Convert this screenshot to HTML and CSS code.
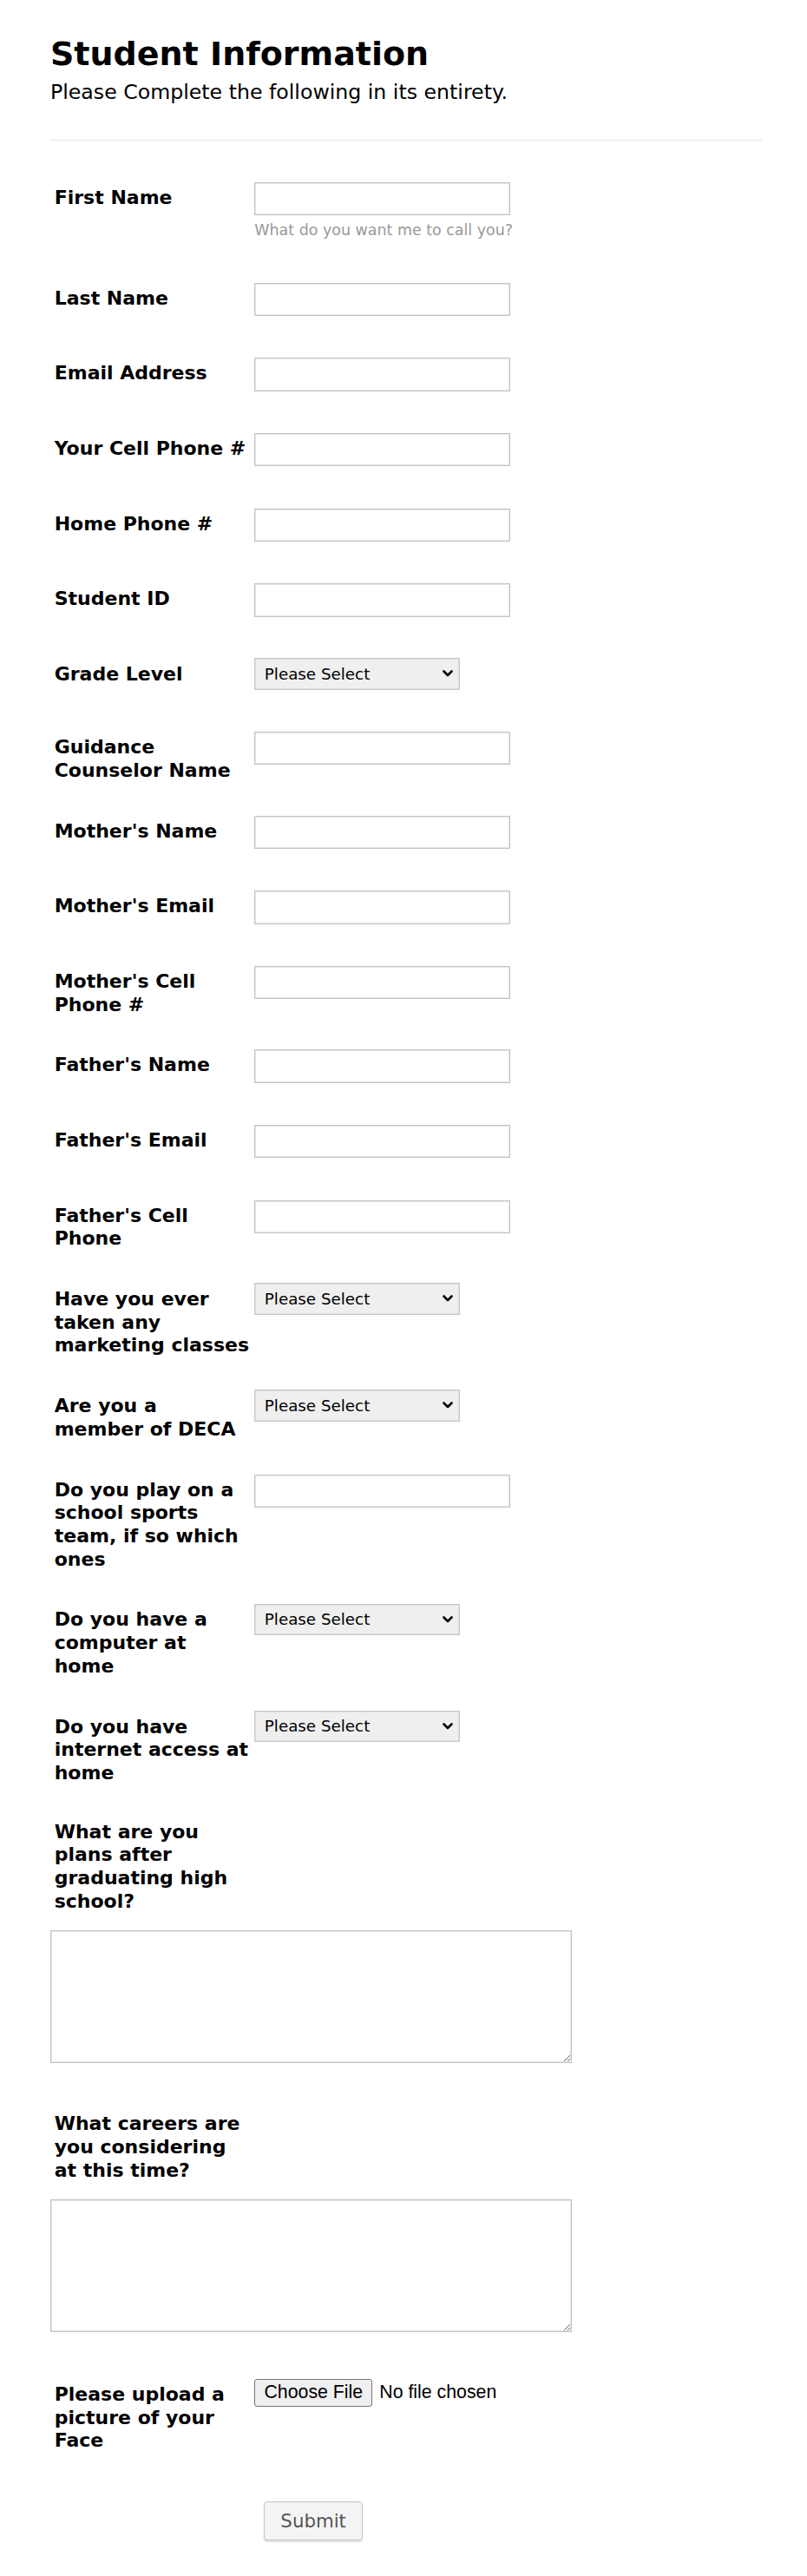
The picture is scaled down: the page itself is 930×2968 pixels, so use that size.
FILE: index.html
```html
<!DOCTYPE html>
<html lang="en">
<head>
<meta charset="utf-8">
<title>Student Information</title>
<link rel="stylesheet" href="styles.css">
</head>
<body>
<form class="form">
  <header class="form-header">
    <h1 class="title">Student Information</h1>
    <p class="subtitle">Please Complete the following in its entirety.</p>
  </header>
  <hr class="divider">

  <div class="row">
    <label class="label">First Name</label>
    <div class="control">
      <input class="textbox" type="text">
      <div class="sublabel">What do you want me to call you?</div>
    </div>
  </div>

  <div class="row">
    <label class="label">Last Name</label>
    <div class="control"><input class="textbox" type="text"></div>
  </div>

  <div class="row">
    <label class="label">Email Address</label>
    <div class="control"><input class="textbox" type="email"></div>
  </div>

  <div class="row">
    <label class="label">Your Cell Phone #</label>
    <div class="control"><input class="textbox" type="text"></div>
  </div>

  <div class="row">
    <label class="label">Home Phone #</label>
    <div class="control"><input class="textbox" type="text"></div>
  </div>

  <div class="row">
    <label class="label">Student ID</label>
    <div class="control"><input class="textbox" type="text"></div>
  </div>

  <div class="row">
    <label class="label">Grade Level</label>
    <div class="control">
      <span class="select-wrap">
        <select class="dropdown"><option>Please Select</option></select>
        <svg class="chevron" viewBox="0 0 12 8" aria-hidden="true"><path d="M1.5 1.5 L6 6 L10.5 1.5" fill="none" stroke="#000" stroke-width="2.6" stroke-linecap="round" stroke-linejoin="round"/></svg>
      </span>
    </div>
  </div>

  <div class="row">
    <label class="label">Guidance Counselor Name</label>
    <div class="control"><input class="textbox" type="text"></div>
  </div>

  <div class="row">
    <label class="label">Mother's Name</label>
    <div class="control"><input class="textbox" type="text"></div>
  </div>

  <div class="row">
    <label class="label">Mother's Email</label>
    <div class="control"><input class="textbox" type="email"></div>
  </div>

  <div class="row">
    <label class="label">Mother's Cell Phone #</label>
    <div class="control"><input class="textbox" type="text"></div>
  </div>

  <div class="row">
    <label class="label">Father's Name</label>
    <div class="control"><input class="textbox" type="text"></div>
  </div>

  <div class="row">
    <label class="label">Father's Email</label>
    <div class="control"><input class="textbox" type="email"></div>
  </div>

  <div class="row">
    <label class="label">Father's Cell Phone</label>
    <div class="control"><input class="textbox" type="text"></div>
  </div>

  <div class="row">
    <label class="label">Have you ever taken any marketing classes</label>
    <div class="control">
      <span class="select-wrap">
        <select class="dropdown"><option>Please Select</option></select>
        <svg class="chevron" viewBox="0 0 12 8" aria-hidden="true"><path d="M1.5 1.5 L6 6 L10.5 1.5" fill="none" stroke="#000" stroke-width="2.6" stroke-linecap="round" stroke-linejoin="round"/></svg>
      </span>
    </div>
  </div>

  <div class="row">
    <label class="label">Are you a member of DECA</label>
    <div class="control">
      <span class="select-wrap">
        <select class="dropdown"><option>Please Select</option></select>
        <svg class="chevron" viewBox="0 0 12 8" aria-hidden="true"><path d="M1.5 1.5 L6 6 L10.5 1.5" fill="none" stroke="#000" stroke-width="2.6" stroke-linecap="round" stroke-linejoin="round"/></svg>
      </span>
    </div>
  </div>

  <div class="row">
    <label class="label">Do you play on a school sports team, if so which ones</label>
    <div class="control"><input class="textbox" type="text"></div>
  </div>

  <div class="row">
    <label class="label">Do you have a computer at home</label>
    <div class="control">
      <span class="select-wrap">
        <select class="dropdown"><option>Please Select</option></select>
        <svg class="chevron" viewBox="0 0 12 8" aria-hidden="true"><path d="M1.5 1.5 L6 6 L10.5 1.5" fill="none" stroke="#000" stroke-width="2.6" stroke-linecap="round" stroke-linejoin="round"/></svg>
      </span>
    </div>
  </div>

  <div class="row">
    <label class="label">Do you have internet access at home</label>
    <div class="control">
      <span class="select-wrap">
        <select class="dropdown"><option>Please Select</option></select>
        <svg class="chevron" viewBox="0 0 12 8" aria-hidden="true"><path d="M1.5 1.5 L6 6 L10.5 1.5" fill="none" stroke="#000" stroke-width="2.6" stroke-linecap="round" stroke-linejoin="round"/></svg>
      </span>
    </div>
  </div>

  <div class="row row-stack">
    <label class="label label-top">What are you plans after graduating high school?</label>
    <div class="control control-area"><textarea class="textarea"></textarea></div>
  </div>

  <div class="row row-stack">
    <label class="label label-top">What careers are you considering at this time?</label>
    <div class="control control-area"><textarea class="textarea"></textarea></div>
  </div>

  <div class="row">
    <label class="label">Please upload a picture of your Face</label>
    <div class="control">
      <label class="file-field">
        <input class="file-native" type="file">
        <span class="file-btn">Choose File</span>
        <span class="file-status">No file chosen</span>
      </label>
    </div>
  </div>

  <div class="row row-submit">
    <button class="submit" type="button">Submit</button>
  </div>
</form>
</body>
</html>
```

FILE: styles.css
```css
html, body {
  margin: 0;
  padding: 0;
  background: #ffffff;
}

body {
  font-family: "DejaVu Sans", Verdana, sans-serif;
  color: #000000;
}

.form {
  padding: 40px 52px 30px 58px;
}

.form-header {
  display: flex;
  flex-direction: column;
}

.title {
  margin: 0;
  font-size: 38px;
  line-height: 44px;
  font-weight: bold;
}

.subtitle {
  margin: 8px 0 0;
  font-size: 23.65px;
  line-height: 28px;
  font-weight: normal;
}

.divider {
  border: 0;
  border-top: 1px solid #e4e4e4;
  height: 0;
  margin: 41px 0 29px;
}

.row {
  display: flex;
  align-items: flex-start;
  padding: 19px 0 19px;
}

.label {
  flex: 0 0 235.3px;
  box-sizing: border-box;
  padding: 5px 4.1px 0 4.7px;
  font-size: 22px;
  line-height: 26.7px;
  font-weight: bold;
  color: #000;
}

.control {
  display: flex;
  flex-direction: column;
  align-items: flex-start;
  padding-bottom: 10.4px;
}

.textbox {
  box-sizing: border-box;
  width: 295px;
  height: 38.3px;
  margin: 0;
  padding: 4px 8px;
  border: 1px solid #c4c4c4;
  box-shadow: inset 0 0 0 1px #e6e6e6;
  background: #ffffff;
  font-family: "DejaVu Sans", sans-serif;
  font-size: 17px;
}

.sublabel {
  margin-top: 5px;
  font-size: 17.45px;
  line-height: 24px;
  color: #999999;
}

.select-wrap {
  position: relative;
  display: inline-block;
  margin-top: -0.8px;
}

.dropdown {
  -webkit-appearance: none;
  appearance: none;
  box-sizing: border-box;
  width: 237px;
  height: 36.4px;
  margin: 0;
  padding: 0 30px 0 10.5px;
  border: 1px solid #c8c8c8;
  box-shadow: inset 0 0 0 1px #dedede;
  border-radius: 0;
  background: #efefef;
  color: #000;
  font-family: "DejaVu Sans", sans-serif;
  font-size: 18.3px;
}

.chevron {
  position: absolute;
  right: 8.5px;
  top: 14px;
  width: 12px;
  height: 8px;
  pointer-events: none;
}

.row-stack {
  flex-direction: column;
}

.label-top {
  flex: none;
  width: 235.3px;
  padding-top: 3px;
}

.control-area {
  padding-top: 19.2px;
  padding-bottom: 16.2px;
}

.textarea {
  box-sizing: border-box;
  width: 601px;
  height: 153.4px;
  margin: 0;
  border: 1px solid #c4c4c4;
  box-shadow: inset 0 0 0 1px #e6e6e6;
  background: #ffffff;
  font-family: "DejaVu Sans", sans-serif;
  font-size: 17px;
}

.file-field {
  display: flex;
  align-items: center;
  font-family: "Liberation Sans", Arial, sans-serif;
  font-size: 21.3px;
  color: #000;
}

.file-native {
  display: none;
}

.file-btn {
  box-sizing: border-box;
  display: inline-flex;
  align-items: center;
  height: 31.7px;
  width: 136px;
  justify-content: center;
  border: 1px solid #767676;
  border-radius: 3px;
  background: #efefef;
  line-height: 1;
}

.file-status {
  margin-left: 8px;
}

.row-submit {
  padding-top: 36.6px;
}

.submit {
  box-sizing: border-box;
  margin-left: 246px;
  width: 114.3px;
  height: 45.3px;
  border: 1px solid #c6c6c6;
  border-radius: 4px;
  background: #f4f4f4;
  box-shadow: 0 2px 2px rgba(0, 0, 0, 0.13);
  color: #555555;
  font-family: "DejaVu Sans", Verdana, sans-serif;
  font-size: 21.3px;
  padding: 0;
}
```
